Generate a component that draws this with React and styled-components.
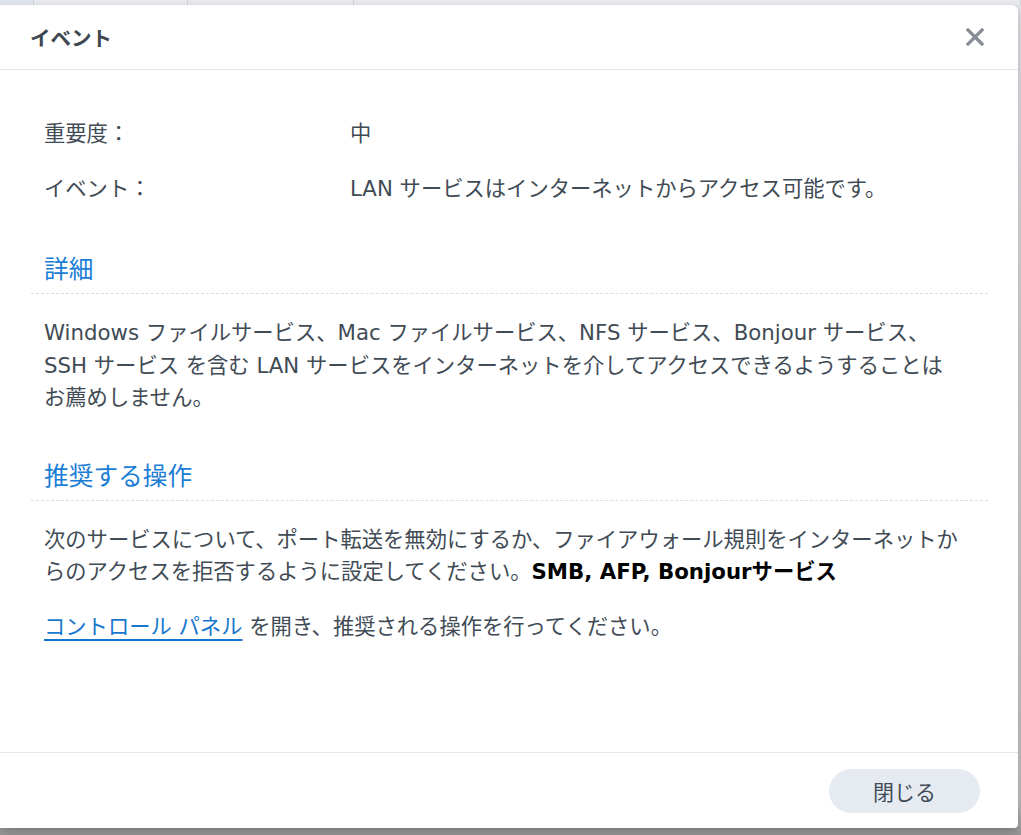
import React from 'react';
import styled, { createGlobalStyle } from 'styled-components';

const GlobalStyle = createGlobalStyle`
  html, body {
    margin: 0;
    padding: 0;
    height: 100%;
    overflow: hidden;
  }
  body {
    background: linear-gradient(to bottom, #e2e4e7 0px, #e2e4e7 6px, #c4c4c4 800px, #989898 835px);
    font-family: "DejaVu Sans", "Noto Sans CJK JP", sans-serif;
    color: #414b55;
  }
`;

const Page = styled.div`
  width: 1021px;
  height: 835px;
  display: flex;
  flex-direction: column;
`;

const BackStrip = styled.div`
  height: 5px;
  display: flex;
  flex-shrink: 0;
`;

const BackCell = styled.div`
  width: ${(p) => p.$w}px;
  border-right: 1px solid #cfd3d8;
  background: ${(p) => p.$bg || '#e9ebee'};
`;

const Dialog = styled.section`
  width: 1018px;
  height: 823px;
  background: #fff;
  border-top-right-radius: 6px;
  border-bottom-right-radius: 4px;
  box-shadow: 0 4px 10px rgba(0, 0, 0, 0.25);
  display: flex;
  flex-direction: column;
`;

const Header = styled.header`
  height: 64px;
  flex-shrink: 0;
  display: flex;
  align-items: center;
  justify-content: space-between;
  padding: 0 31px 0 30px;
  border-bottom: 1px solid #e4e7eb;
`;

const Title = styled.h1`
  margin: 0;
  font-size: 20.5px;
  font-weight: 700;
  color: #3e464f;
  font-family: "Noto Sans CJK JP", sans-serif;
`;

const CloseButton = styled.button`
  border: none;
  background: none;
  padding: 0;
  width: 24px;
  height: 24px;
  display: flex;
  align-items: center;
  justify-content: center;
  cursor: pointer;
`;

const Body = styled.div`
  flex: 1;
  padding: 47px 30px 0 31px;
`;

const InfoRow = styled.div`
  display: grid;
  grid-template-columns: 306px 1fr;
  padding-left: 13px;
  font-size: 21.3px;
  line-height: 33px;
  margin-bottom: 22px;
`;

const SectionTitle = styled.h2`
  margin: ${(p) => p.$top}px 0 0;
  padding: 0 0 10px 13px;
  font-size: 24.7px;
  line-height: 32px;
  font-weight: 400;
  color: #1a7ed6;
  border-bottom: 1px dashed #d9dee4;
  font-family: "Noto Sans CJK JP", sans-serif;
`;

const Paragraph = styled.p`
  margin: ${(p) => p.$top}px 0 0;
  padding-left: 13px;
  font-size: 21.3px;
  line-height: 32.5px;
`;

const Strong = styled.strong`
  color: #000;
  font-weight: 700;
`;

const Link = styled.a`
  color: #1677cc;
  text-decoration: underline;
  text-decoration-thickness: 2px;
  text-underline-offset: 5px;
`;

const Footer = styled.footer`
  height: 76px;
  flex-shrink: 0;
  border-top: 1px solid #e4e7eb;
  display: flex;
  align-items: center;
  justify-content: flex-end;
  padding: 0 38px 0 0;
  box-sizing: border-box;
`;

const Button = styled.button`
  width: 151px;
  height: 44px;
  border: none;
  border-radius: 22px;
  background: #e6ebf2;
  color: #414b55;
  font-size: 21px;
  font-family: "Noto Sans CJK JP", sans-serif;
  cursor: pointer;
`;

function CloseIcon() {
	return (
		<svg width="18" height="18" viewBox="0 0 18 18">
			<path d="M2 2 L16 16 M16 2 L2 16" stroke="#858c95" strokeWidth="3.2" strokeLinecap="square" />
		</svg>
	);
}

export default function App() {
	return (
		<Page>
			<GlobalStyle />
			<BackStrip>
				<BackCell $w={33} $bg="#dfe6ef" />
				<BackCell $w={154} />
				<BackCell $w={165} />
				<BackCell $w={669} />
			</BackStrip>
			<Dialog>
				<Header>
					<Title>イベント</Title>
					<CloseButton aria-label="close">
						<CloseIcon />
					</CloseButton>
				</Header>
				<Body>
					<InfoRow>
						<span>重要度：</span>
						<span>中</span>
					</InfoRow>
					<InfoRow>
						<span>イベント：</span>
						<span>LAN サービスはインターネットからアクセス可能です。</span>
					</InfoRow>
					<SectionTitle $top={46}>詳細</SectionTitle>
					<Paragraph $top={23}>
						Windows ファイルサービス、Mac ファイルサービス、NFS サービス、Bonjour サービス、
						<br />
						SSH サービス を含む LAN サービスをインターネットを介してアクセスできるようすることは
						<br />
						お薦めしません。
					</Paragraph>
					<SectionTitle $top={43}>推奨する操作</SectionTitle>
					<Paragraph $top={23}>
						次のサービスについて、ポート転送を無効にするか、ファイアウォール規則をインターネットか
						<br />
						らのアクセスを拒否するように設定してください。<Strong>SMB, AFP, Bonjourサービス</Strong>
					</Paragraph>
					<Paragraph $top={22}>
						<Link href="#">コントロール パネル</Link> を開き、推奨される操作を行ってください。
					</Paragraph>
				</Body>
				<Footer>
					<Button>閉じる</Button>
				</Footer>
			</Dialog>
		</Page>
	);
}
